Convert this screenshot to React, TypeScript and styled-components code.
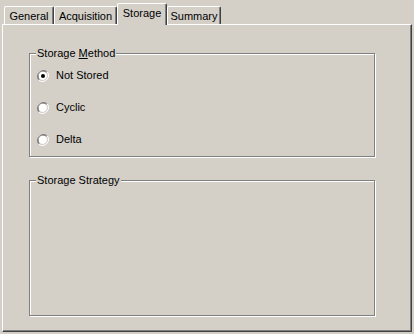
import styled, { createGlobalStyle } from 'styled-components';

const GlobalStyle = createGlobalStyle`
  html, body {
    margin: 0;
    padding: 0;
    background: #d4d0c8;
  }
  body {
    font-family: 'Liberation Sans', Arial, sans-serif;
    font-size: 11px;
    color: #000;
  }
`;

const tabs = [
  { label: 'General', width: 50 },
  { label: 'Acquisition', width: 63 },
  { label: 'Storage', width: 50 },
  { label: 'Summary', width: 54 },
];

const methods = ['Not Stored', 'Cyclic', 'Delta'];

function RadioMark({ checked }: { checked: boolean }) {
  return (
    <svg width="12" height="12" viewBox="0 0 12 12">
      <path d="M10.2 1.8 A6 6 0 0 0 1.8 10.2" fill="none" stroke="#808080" strokeWidth="1" />
      <path d="M9.5 2.5 A5 5 0 0 0 2.5 9.5" fill="none" stroke="#404040" strokeWidth="1" />
      <circle cx="6" cy="6" r="4.5" fill="#fff" />
      <path d="M1.8 10.2 A6 6 0 0 0 10.2 1.8" fill="none" stroke="#fff" strokeWidth="1" />
      <path d="M2.5 9.5 A5 5 0 0 0 9.5 2.5" fill="none" stroke="#d4d0c8" strokeWidth="1" />
      {checked && <circle cx="6" cy="6" r="2" fill="#000" />}
    </svg>
  );
}

function App() {
  const selected = 'Storage';
  const method = 'Not Stored';

  return (
    <>
      <GlobalStyle />
      <Window>
        <TabStrip>
          {tabs.map((t) => (
            <Tab key={t.label} $active={t.label === selected} $width={t.width}>
              {t.label}
            </Tab>
          ))}
        </TabStrip>
        <Panel>
          <Group $height={104}>
            <Legend>
              Storage <u>M</u>ethod
            </Legend>
            <RadioList>
              {methods.map((m) => (
                <RadioRow key={m}>
                  <RadioMark checked={m === method} />
                  <span>{m}</span>
                </RadioRow>
              ))}
            </RadioList>
          </Group>
          <Group $height={136}>
            <Legend>Storage Strategy</Legend>
          </Group>
        </Panel>
      </Window>
    </>
  );
}

const Window = styled.div`
  width: 414px;
  height: 334px;
  display: flex;
  flex-direction: column;
  box-sizing: border-box;
  padding: 0 2px 2px 2px;
`;

const TabStrip = styled.div`
  display: flex;
  align-items: flex-end;
  height: 24px;
  padding-left: 2px;
`;

const Tab = styled.div<{ $active?: boolean; $width: number }>`
  position: relative;
  z-index: ${({ $active }) => ($active ? 2 : 1)};
  box-sizing: border-box;
  width: ${({ $width }) => $width}px;
  height: ${({ $active }) => ($active ? '22px' : '18px')};
  margin-bottom: ${({ $active }) => ($active ? '-1px' : '0')};
  padding-top: 3px;
  display: flex;
  justify-content: center;
  align-items: flex-start;
  background: #d4d0c8;
  border-top: 1px solid #fff;
  border-left: 1px solid #fff;
  border-right: 1px solid #404040;
  border-top-left-radius: 2px;
  border-top-right-radius: 2px;
  box-shadow: inset -1px 0 0 #808080;
  line-height: 13px;
  white-space: nowrap;
`;

const Panel = styled.div`
  flex: 1;
  box-sizing: border-box;
  border-top: 1px solid #fff;
  border-left: 1px solid #fff;
  border-right: 1px solid #404040;
  border-bottom: 1px solid #404040;
  box-shadow: inset -1px -1px 0 #808080;
  padding: 28px 0 0 26px;
  display: flex;
  flex-direction: column;
  gap: 23px;
`;

const Group = styled.div<{ $height: number }>`
  position: relative;
  box-sizing: border-box;
  width: 346px;
  height: ${({ $height }) => $height}px;
  border: 1px solid #808080;
  box-shadow: 1px 1px 0 #fff, inset 1px 1px 0 #fff;
`;

const Legend = styled.span`
  position: absolute;
  top: -7px;
  left: 6px;
  padding: 0 1px;
  background: #d4d0c8;
  line-height: 13px;
  white-space: nowrap;
`;

const RadioList = styled.div`
  display: flex;
  flex-direction: column;
  gap: 19px;
  padding: 15px 0 0 7px;
`;

const RadioRow = styled.label`
  display: flex;
  align-items: center;
  gap: 7px;
  height: 13px;
  line-height: 13px;
`;

export default App;
